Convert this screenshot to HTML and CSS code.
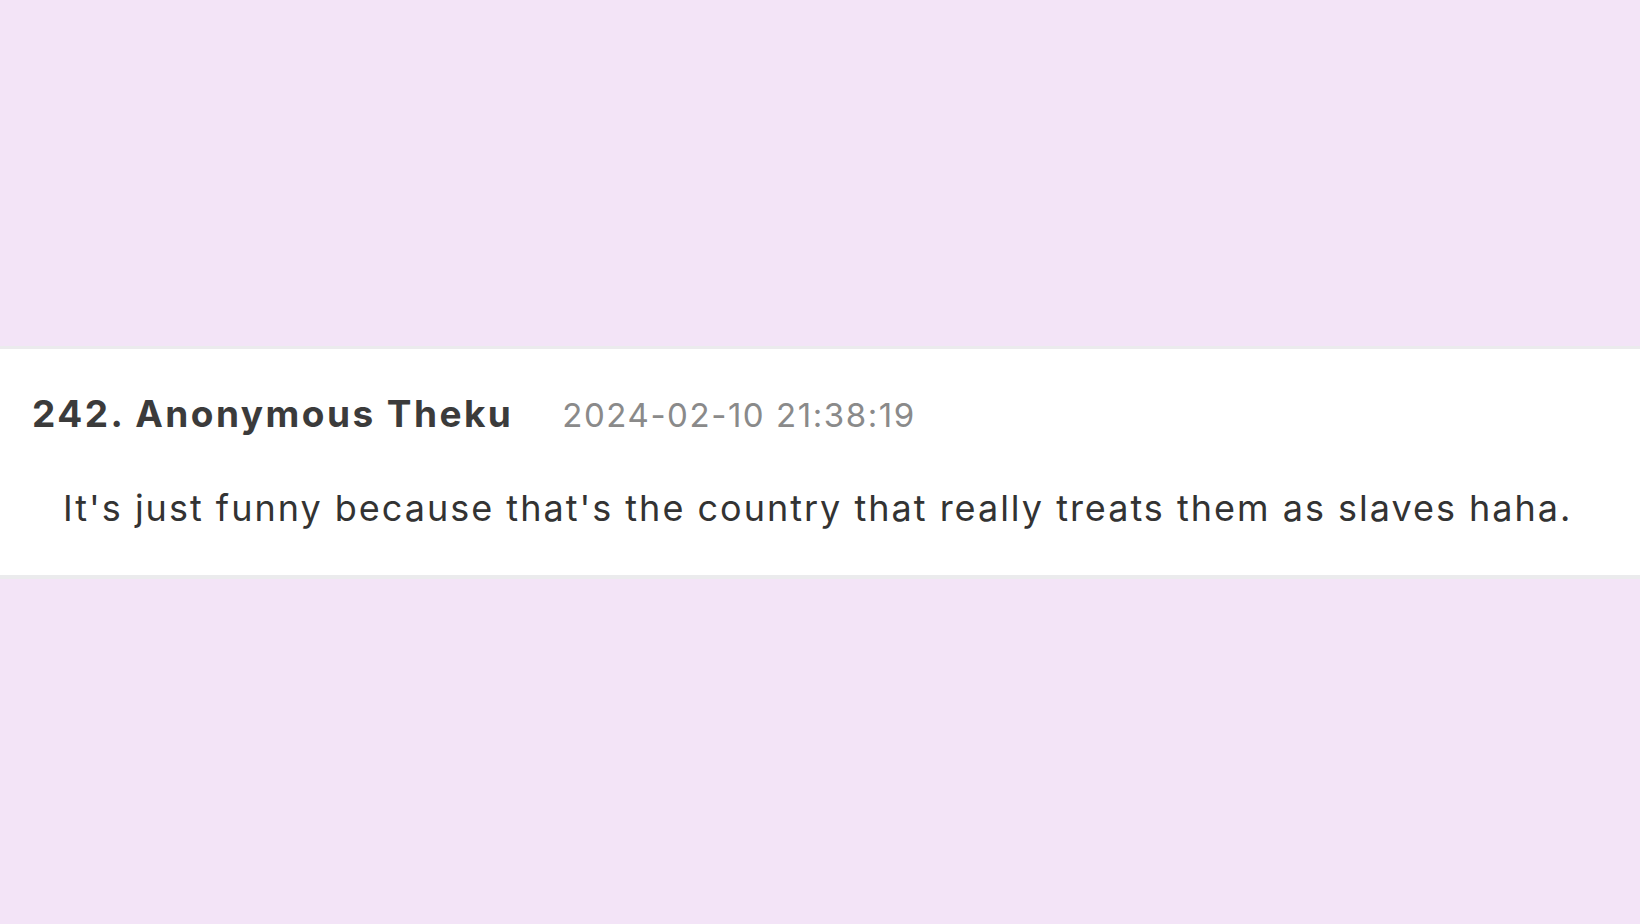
FILE: index.html
```html
<!DOCTYPE html>
<html>
<head>
<meta charset="utf-8">
<link rel="stylesheet" href="styles.css">
</head>
<body>
<main class="page">
  <article class="comment">
    <header class="comment-head">
      <span class="comment-author">242. Anonymous Theku</span>
      <span class="comment-time">2024-02-10 21:38:19</span>
    </header>
    <p class="comment-body">It's just funny because that's the country that really treats them as slaves haha.</p>
  </article>
</main>
</body>
</html>
```

FILE: styles.css
```css
html, body {
  margin: 0;
  padding: 0;
}
body {
  background: #f3e4f7;
  font-family: Inter, "Noto Sans", "Liberation Sans", sans-serif;
}
.page {
  height: 924px;
  display: flex;
  flex-direction: column;
  justify-content: center;
}
.comment {
  background: #ffffff;
  border-top: 3px solid #ebebed;
  border-bottom: 4px solid #ebebed;
  padding: 41px 0 43px 32px;
}
.comment-head {
  display: flex;
  align-items: baseline;
  gap: 49px;
  line-height: 48px;
}
.comment-author {
  font-size: 37px;
  font-weight: 700;
  letter-spacing: 2.45px;
  color: #3b3b3b;
}
.comment-time {
  font-size: 33px;
  letter-spacing: 1.55px;
  color: #8a8a8a;
}
.comment-body {
  margin: 45px 0 0 31px;
  font-size: 36px;
  line-height: 48px;
  letter-spacing: 2px;
  color: #333333;
}
```
